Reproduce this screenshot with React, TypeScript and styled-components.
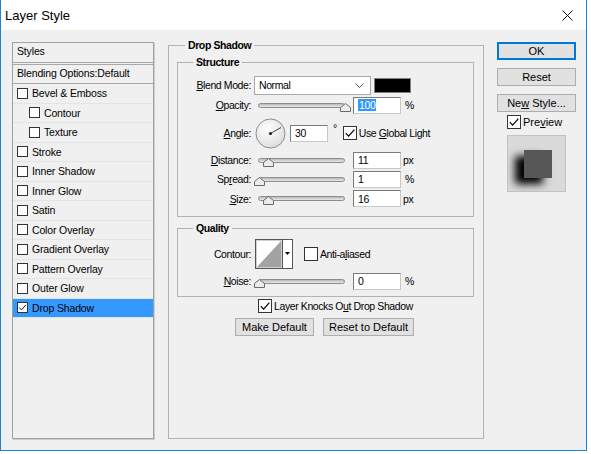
import styled, { createGlobalStyle } from "styled-components"

const GlobalStyle = createGlobalStyle`
  html, body {
    margin: 0;
    padding: 0;
    background: #fff;
  }
  body {
    font-family: "Liberation Sans", Arial, sans-serif;
    font-size: 10.5px;
    letter-spacing: -0.4px;
    color: #000;
  }
  * { box-sizing: border-box; }
`

const Window = styled.div`
  width: 587px;
  height: 451px;
  border: 1px solid #1883d7;
  border-top: none;
  display: flex;
  flex-direction: column;
  background: #f0f0f0;
`

const TitleBar = styled.div`
  height: 30px;
  flex: none;
  background: #fff;
  display: flex;
  align-items: center;
  justify-content: space-between;
  padding-left: 4px;
  padding-right: 13px;
  font-size: 13px;
  letter-spacing: 0;
`

const Body = styled.div`
  flex: 1;
  display: flex;
  align-items: flex-start;
  padding: 8px 0 0 11px;
`

/* ---------- left style list ---------- */

const StyleList = styled.div`
  width: 142px;
  height: 397px;
  margin-top: 4px;
  border: 1px solid #a0a0a0;
  box-shadow: 1px 1px 0 #cdcdcd;
  background: #f0f0f0;
  letter-spacing: -0.15px;
`

const ListHeader = styled.div`
  height: 22px;
  padding: 2px 0 0 4px;
  border-bottom: 3px double #a8a8a8;
`

const ListBlending = styled.div`
  height: 19px;
  padding: 2px 0 0 4px;
  border-bottom: 1px solid #a8a8a8;
`

const ListRow = styled.div<{ $indent?: boolean; $active?: boolean }>`
  height: 19.5px;
  display: flex;
  align-items: center;
  gap: 4px;
  padding-left: ${(p) => (p.$indent ? 16 : 4)}px;
  border-bottom: 1px solid #e4e4e4;
  background: ${(p) => (p.$active ? "#3399ff" : "transparent")};
`

/* ---------- form pieces ---------- */

const Group = styled.fieldset<{ $w: number; $pad: string; $mt?: number }>`
  width: ${(p) => p.$w}px;
  margin: ${(p) => p.$mt ?? 0}px 0 0 0;
  padding: ${(p) => p.$pad};
  border: 1px solid #b3b3b3;
  min-width: 0;
`

const Legend = styled.legend<{ $ml: number }>`
  margin-left: ${(p) => p.$ml}px;
  padding: 0 3px;
  font-weight: bold;
  line-height: 14px;
`

const FormRow = styled.div<{ $h: number }>`
  display: flex;
  align-items: center;
  height: ${(p) => p.$h}px;
`

const FieldLabel = styled.span`
  width: 73px;
  flex: none;
  text-align: right;
`

const Select = styled.div`
  margin-left: 3px;
  width: 117px;
  height: 19px;
  background: #fff;
  border: 1px solid #a9a9a9;
  display: flex;
  align-items: center;
  justify-content: space-between;
  padding: 0 6px 0 4px;
`

const Swatch = styled.div`
  margin-left: 3px;
  width: 37px;
  height: 15px;
  background: #000;
  border: 1px solid #808080;
`

const Track = styled.div`
  position: relative;
  margin-left: 7px;
  width: 87px;
  height: 5px;
  border: 1px solid #8e8e8e;
  border-radius: 3px;
  background: linear-gradient(#b9b9b9, #e9e9e9);
`

const ThumbSvg = styled.svg`
  position: absolute;
  top: -1px;
`

const NumInput = styled.div<{ $w: number; $ml: number }>`
  margin-left: ${(p) => p.$ml}px;
  width: ${(p) => p.$w}px;
  height: 17px;
  background: #fff;
  border: 1px solid #7a7a7a;
  border-right-color: #c8c8c8;
  border-bottom-color: #c8c8c8;
  padding-left: 4px;
  display: flex;
  align-items: center;
`

const Selected = styled.span`
  background: #3399ff;
  color: #fff;
  padding: 0 1px;
`

const Unit = styled.span<{ $ml?: number; $raise?: boolean }>`
  margin-left: ${(p) => p.$ml ?? 4}px;
  position: relative;
  top: ${(p) => (p.$raise ? -5 : 0)}px;
`

const CheckBox = styled.span<{ $size: number }>`
  flex: none;
  width: ${(p) => p.$size}px;
  height: ${(p) => p.$size}px;
  border: 1px solid #333;
  background: #fff;
  display: inline-flex;
  align-items: center;
  justify-content: center;
`

const CheckRow = styled.div<{ $ml: number; $mt?: number }>`
  display: flex;
  align-items: center;
  gap: 2px;
  height: 14px;
  margin-left: ${(p) => p.$ml}px;
  margin-top: ${(p) => p.$mt ?? 0}px;
`

const ContourPicker = styled.div`
  margin-left: 4px;
  width: 38px;
  height: 30px;
  border: 1px solid #555;
  background: #fff;
  display: flex;
`

const ContourArrow = styled.div`
  width: 10px;
  border-left: 1px solid #555;
  display: flex;
  align-items: center;
  justify-content: center;
`

const ButtonRow = styled.div`
  display: flex;
  gap: 9px;
  margin: 5px 0 0 58px;
`

const Button = styled.div<{ $w: number; $default?: boolean }>`
  width: ${(p) => p.$w}px;
  height: 18px;
  background: #e1e1e1;
  border: 1px solid ${(p) => (p.$default ? "#0078d7" : "#adadad")};
  box-shadow: ${(p) => (p.$default ? "inset 0 0 0 1px #0078d7" : "none")};
  display: flex;
  align-items: center;
  justify-content: center;
  font-size: 11px;
  letter-spacing: 0;
`

/* ---------- right column ---------- */

const Side = styled.div`
  margin-left: 13px;
  width: 79px;
  display: flex;
  flex-direction: column;
  gap: 8px;
  padding-top: 4px;
`

const PreviewLabel = styled.span`
  font-size: 11px;
  letter-spacing: 0;
`

const PreviewBox = styled.div`
  margin: -2px 0 0 10px;
  width: 59px;
  height: 57px;
  border: 1px solid #c2c2c2;
  background: #dadada;
  display: flex;
  align-items: center;
  justify-content: center;
  padding-left: 2px;
  overflow: hidden;
`

const PreviewSquare = styled.div`
  width: 28px;
  height: 28px;
  background: #575757;
  box-shadow: -9px 6px 8px 0 #000;
`

/* ---------- small drawings ---------- */

function Check({ size }: { size: number }) {
  const s = size - 2
  return (
    <svg width={s} height={s} viewBox="0 0 12 12">
      <path d="M1.8 6.2 L4.6 9.2 L10.4 2.6" fill="none" stroke="#000" strokeWidth="1.2" />
    </svg>
  )
}

function Box({ size, checked }: { size: number; checked?: boolean }) {
  return <CheckBox $size={size}>{checked && <Check size={size} />}</CheckBox>
}

function Slider({ pos }: { pos: number }) {
  return (
    <Track>
      <ThumbSvg width="11" height="9" viewBox="0 0 11 9" style={{ left: pos - 6 }}>
        <path d="M0.5 8.5 V4.5 L5.5 0.5 L10.5 4.5 V8.5 Z" fill="#ececec" stroke="#6a6a6a" />
      </ThumbSvg>
    </Track>
  )
}

function Dial() {
  return (
    <svg width="31" height="31" viewBox="0 0 31 31" style={{ marginLeft: 4 }}>
      <defs>
        <radialGradient id="dialg" cx="40%" cy="35%" r="70%">
          <stop offset="0%" stopColor="#ffffff" />
          <stop offset="100%" stopColor="#dcdcdc" />
        </radialGradient>
      </defs>
      <circle cx="15.5" cy="15.5" r="14.5" fill="url(#dialg)" stroke="#8c8c8c" />
      <line x1="15.5" y1="15.5" x2="26" y2="9.5" stroke="#444" strokeWidth="1" />
      <circle cx="15.5" cy="15.5" r="1.6" fill="#222" />
    </svg>
  )
}

const styleItems: { label: string; indent?: boolean; checked?: boolean }[] = [
  { label: "Bevel & Emboss" },
  { label: "Contour", indent: true },
  { label: "Texture", indent: true },
  { label: "Stroke" },
  { label: "Inner Shadow" },
  { label: "Inner Glow" },
  { label: "Satin" },
  { label: "Color Overlay" },
  { label: "Gradient Overlay" },
  { label: "Pattern Overlay" },
  { label: "Outer Glow" },
  { label: "Drop Shadow", checked: true },
]

export default function App() {
  return (
    <>
      <GlobalStyle />
      <Window>
        <TitleBar>
          <span>Layer Style</span>
          <svg width="11" height="11" viewBox="0 0 11 11">
            <path d="M0.5 0.5 L10.5 10.5 M10.5 0.5 L0.5 10.5" stroke="#111" strokeWidth="1" />
          </svg>
        </TitleBar>
        <Body>
          <StyleList>
            <ListHeader>Styles</ListHeader>
            <ListBlending>Blending Options:Default</ListBlending>
            {styleItems.map((it) => (
              <ListRow key={it.label} $indent={it.indent} $active={it.checked}>
                <Box size={11} checked={it.checked} />
                <span>{it.label}</span>
              </ListRow>
            ))}
          </StyleList>

          <Group $w={316} $pad="0 9px 0 8px" style={{ height: 401, marginLeft: 14 }}>
            <Legend $ml={8}>Drop Shadow</Legend>

            <Group $w={297} $pad="6px 0 8px 0" $mt={3}>
              <Legend $ml={15}>Structure</Legend>
              <FormRow $h={20}>
                <FieldLabel>
                  <u>B</u>lend Mode:
                </FieldLabel>
                <Select>
                  <span>Normal</span>
                  <svg width="9" height="5" viewBox="0 0 9 5">
                    <path d="M0.5 0.5 L4.5 4.5 L8.5 0.5" fill="none" stroke="#555" />
                  </svg>
                </Select>
                <Swatch />
              </FormRow>
              <FormRow $h={20}>
                <FieldLabel>
                  <u>O</u>pacity:
                </FieldLabel>
                <Slider pos={87} />
                <NumInput $w={48} $ml={8}>
                  <Selected>100</Selected>
                </NumInput>
                <Unit>%</Unit>
              </FormRow>
              <FormRow $h={36}>
                <FieldLabel>
                  <u>A</u>ngle:
                </FieldLabel>
                <Dial />
                <NumInput $w={38} $ml={4}>
                  30
                </NumInput>
                <Unit $ml={5} $raise>
                  °
                </Unit>
                <CheckRow $ml={6}>
                  <Box size={14} checked />
                  <span>
                    Use <u>G</u>lobal Light
                  </span>
                </CheckRow>
              </FormRow>
              <FormRow $h={18}>
                <FieldLabel>
                  <u>D</u>istance:
                </FieldLabel>
                <Slider pos={10} />
                <NumInput $w={48} $ml={8}>
                  11
                </NumInput>
                <Unit $ml={2}>px</Unit>
              </FormRow>
              <FormRow $h={20}>
                <FieldLabel>
                  Sp<u>r</u>ead:
                </FieldLabel>
                <Slider pos={1} />
                <NumInput $w={48} $ml={8}>
                  1
                </NumInput>
                <Unit>%</Unit>
              </FormRow>
              <FormRow $h={19}>
                <FieldLabel>
                  <u>S</u>ize:
                </FieldLabel>
                <Slider pos={10} />
                <NumInput $w={48} $ml={8}>
                  16
                </NumInput>
                <Unit $ml={2}>px</Unit>
              </FormRow>
            </Group>

            <Group $w={297} $pad="0 0 6px 0" $mt={4}>
              <Legend $ml={15}>Quality</Legend>
              <FormRow $h={37}>
                <FieldLabel>Contour:</FieldLabel>
                <ContourPicker>
                  <svg width="26" height="28" viewBox="0 0 26 28">
                    <rect x="0.5" y="0.5" width="25" height="27" fill="#fff" stroke="#d0d0d0" />
                    <polygon points="1,27 25,1 25,27" fill="#a3a3a3" />
                  </svg>
                  <ContourArrow>
                    <svg width="5" height="3" viewBox="0 0 5 3">
                      <polygon points="0,0 5,0 2.5,3" fill="#000" />
                    </svg>
                  </ContourArrow>
                </ContourPicker>
                <CheckRow $ml={11}>
                  <Box size={14} />
                  <span>
                    Anti-a<u>l</u>iased
                  </span>
                </CheckRow>
              </FormRow>
              <FormRow $h={18}>
                <FieldLabel>
                  <u>N</u>oise:
                </FieldLabel>
                <Slider pos={1} />
                <NumInput $w={48} $ml={8}>
                  0
                </NumInput>
                <Unit>%</Unit>
              </FormRow>
            </Group>

            <CheckRow $ml={81} $mt={2}>
              <Box size={14} checked />
              <span>
                Layer Knocks O<u>u</u>t Drop Shadow
              </span>
            </CheckRow>
            <ButtonRow>
              <Button $w={79}>Make Default</Button>
              <Button $w={91}>Reset to Default</Button>
            </ButtonRow>
          </Group>

          <Side>
            <Button $w={79} $default>
              OK
            </Button>
            <Button $w={79}>Reset</Button>
            <Button $w={79}>
              <span>
                Ne<u>w</u> Style...
              </span>
            </Button>
            <CheckRow $ml={10} $mt={-5}>
              <Box size={14} checked />
              <PreviewLabel>
                Pre<u>v</u>iew
              </PreviewLabel>
            </CheckRow>
            <PreviewBox>
              <PreviewSquare />
            </PreviewBox>
          </Side>
        </Body>
      </Window>
    </>
  )
}
